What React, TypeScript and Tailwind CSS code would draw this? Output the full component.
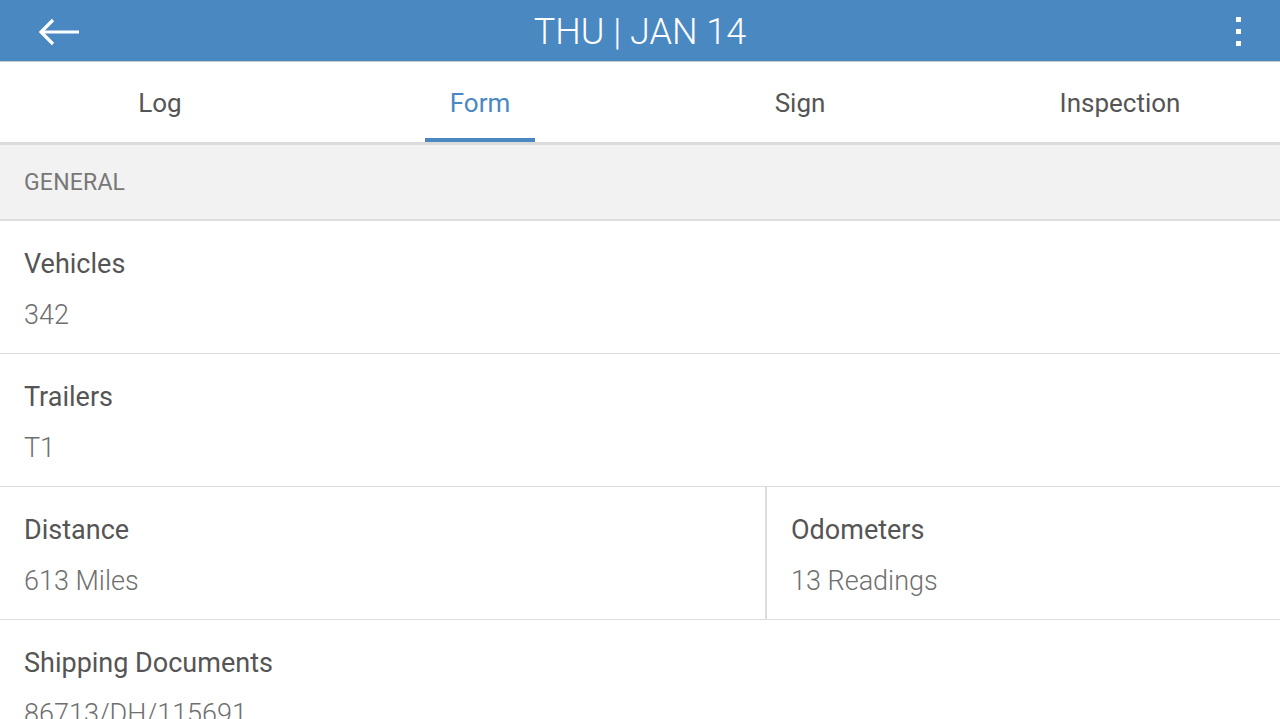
import React from "react";

const tabs = ["Log", "Form", "Sign", "Inspection"];

function Field({ label, value }: { label: string; value: string }) {
  return (
    <div className="pl-6 pt-[27px]">
      <div className="text-[27px] leading-[32px] text-[#555555]">{label}</div>
      <div className="mt-[19px] text-[27px] leading-[32px] font-light text-[#6f6f6f]">{value}</div>
    </div>
  );
}

export default function App() {
  return (
    <div className="w-[1280px] h-[719px] overflow-hidden bg-white" style={{ fontFamily: "Roboto, 'Noto Sans', sans-serif" }}>
      <header className="h-[62px] bg-[#4a88c2] border-b border-[#c5cbd1] flex items-center relative">
        <div className="pl-[38px] pt-[2px] flex items-center">
          <svg width="42" height="28" viewBox="0 0 42 28" fill="none" stroke="white" strokeWidth="3.2" strokeLinecap="butt">
            <path d="M41 14H3" />
            <path d="M15 2L3 14L15 26" />
          </svg>
        </div>
        <div className="absolute inset-0 pt-[3px] flex items-center justify-center pointer-events-none">
          <span className="text-white text-[36px] font-light leading-none">THU | JAN 14</span>
        </div>
        <div className="ml-auto mr-[39px] pt-[1px] flex flex-col gap-[7px]">
          <span className="block w-[5px] h-[5px] bg-white"></span>
          <span className="block w-[5px] h-[5px] bg-white"></span>
          <span className="block w-[5px] h-[5px] bg-white"></span>
        </div>
      </header>
      <nav className="grid grid-cols-4 h-[83px] border-b-[3px] border-[#dcdcdc]">
        {tabs.map((t) => {
          const active = t === "Form";
          return (
            <div key={t} className="relative flex items-center justify-center pt-[2px]">
              <span className={`text-[26px] ${active ? "text-[#4a88c2]" : "text-[#555555]"}`}>{t}</span>
              {active && <span className="absolute bottom-0 left-1/2 -translate-x-1/2 w-[110px] h-[4px] bg-[#4a88c2]"></span>}
            </div>
          );
        })}
      </nav>
      <div className="h-[76px] bg-[#f2f2f2] border-b-2 border-[#dddddd] flex items-center pl-6 pt-[3px]">
        <span className="text-[23px] text-[#777777] tracking-[0.2px]">GENERAL</span>
      </div>
      <div className="h-[133px] border-b border-[#dddddd]">
        <Field label="Vehicles" value="342" />
      </div>
      <div className="h-[133px] border-b border-[#dddddd]">
        <Field label="Trailers" value="T1" />
      </div>
      <div className="h-[133px] border-b border-[#dddddd] flex">
        <div className="w-[767px] border-r-2 border-[#dddddd]">
          <Field label="Distance" value="613 Miles" />
        </div>
        <div className="flex-1">
          <Field label="Odometers" value="13 Readings" />
        </div>
      </div>
      <div className="h-[140px]">
        <Field label="Shipping Documents" value="86713/DH/115691" />
      </div>
    </div>
  );
}
